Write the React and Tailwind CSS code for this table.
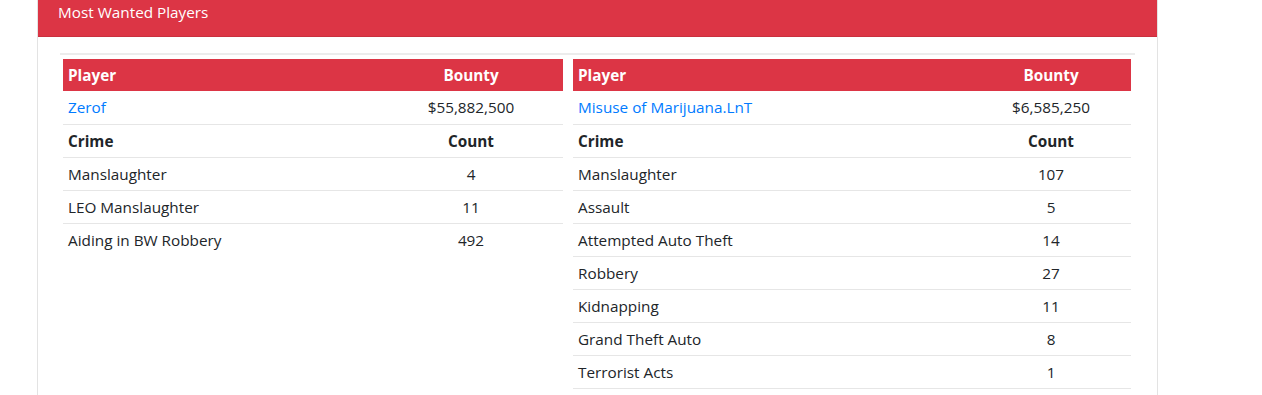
const LEFT = {
  player: "Zerof",
  bounty: "$55,882,500",
  crimes: [
    ["Manslaughter", 4],
    ["LEO Manslaughter", 11],
    ["Aiding in BW Robbery", 492],
  ],
};

const RIGHT = {
  player: "Misuse of Marijuana.LnT",
  bounty: "$6,585,250",
  crimes: [
    ["Manslaughter", 107],
    ["Assault", 5],
    ["Attempted Auto Theft", 14],
    ["Robbery", 27],
    ["Kidnapping", 11],
    ["Grand Theft Auto", 8],
    ["Terrorist Acts", 1],
  ],
};

function WantedTable({ data, width, firstCol }) {
  return (
    <table className="border-collapse text-[15.3px] text-[#212529]" style={{ width }}>
      <colgroup>
        <col style={{ width: firstCol }} />
        <col />
      </colgroup>
      <thead>
        <tr className="bg-[#dc3545] text-white h-[32px]">
          <th className="text-left font-bold px-[5px]">Player</th>
          <th className="text-center font-bold px-[5px]">Bounty</th>
        </tr>
      </thead>
      <tbody>
        <tr className="h-[33px] border-b border-[#e6e6e6]">
          <td className="px-[5px] pt-[1px] text-[#007bff]">{data.player}</td>
          <td className="px-[5px] pt-[1px] text-center">{data.bounty}</td>
        </tr>
        <tr className="h-[33px] border-b border-[#e6e6e6]">
          <td className="px-[5px] pt-[1px] font-bold">Crime</td>
          <td className="px-[5px] pt-[1px] text-center font-bold">Count</td>
        </tr>
        {data.crimes.map(([crime, count]) => (
          <tr key={crime} className="h-[33px] border-b border-[#e6e6e6] last:border-b-0">
            <td className="px-[5px] pt-[1px]">{crime}</td>
            <td className="px-[5px] pt-[1px] text-center">{count}</td>
          </tr>
        ))}
      </tbody>
    </table>
  );
}

export default function App() {
  return (
    <div className="bg-white h-[395px] overflow-hidden" style={{ fontFamily: '"Open Sans", "Noto Sans", sans-serif' }}>
      <div className="ml-[37px] w-[1121px] border-x border-[#e3e3e3] h-full">
        <div className="bg-[#dc3545] h-[37px] border-b border-[#c9303e] text-white text-[15.3px] pl-[20px] pt-[1px]">
          Most Wanted Players
        </div>
        <div className="px-[22px] pt-[16px]">
          <div className="border-t-2 border-[#ececec] pt-[4px] pl-[3px] flex gap-[10px] items-start">
            <WantedTable data={LEFT} width={500} firstCol={316} />
            <div className="border-b border-[#e6e6e6]">
              <WantedTable data={RIGHT} width={558} firstCol={398} />
            </div>
          </div>
        </div>
      </div>
    </div>
  );
}
